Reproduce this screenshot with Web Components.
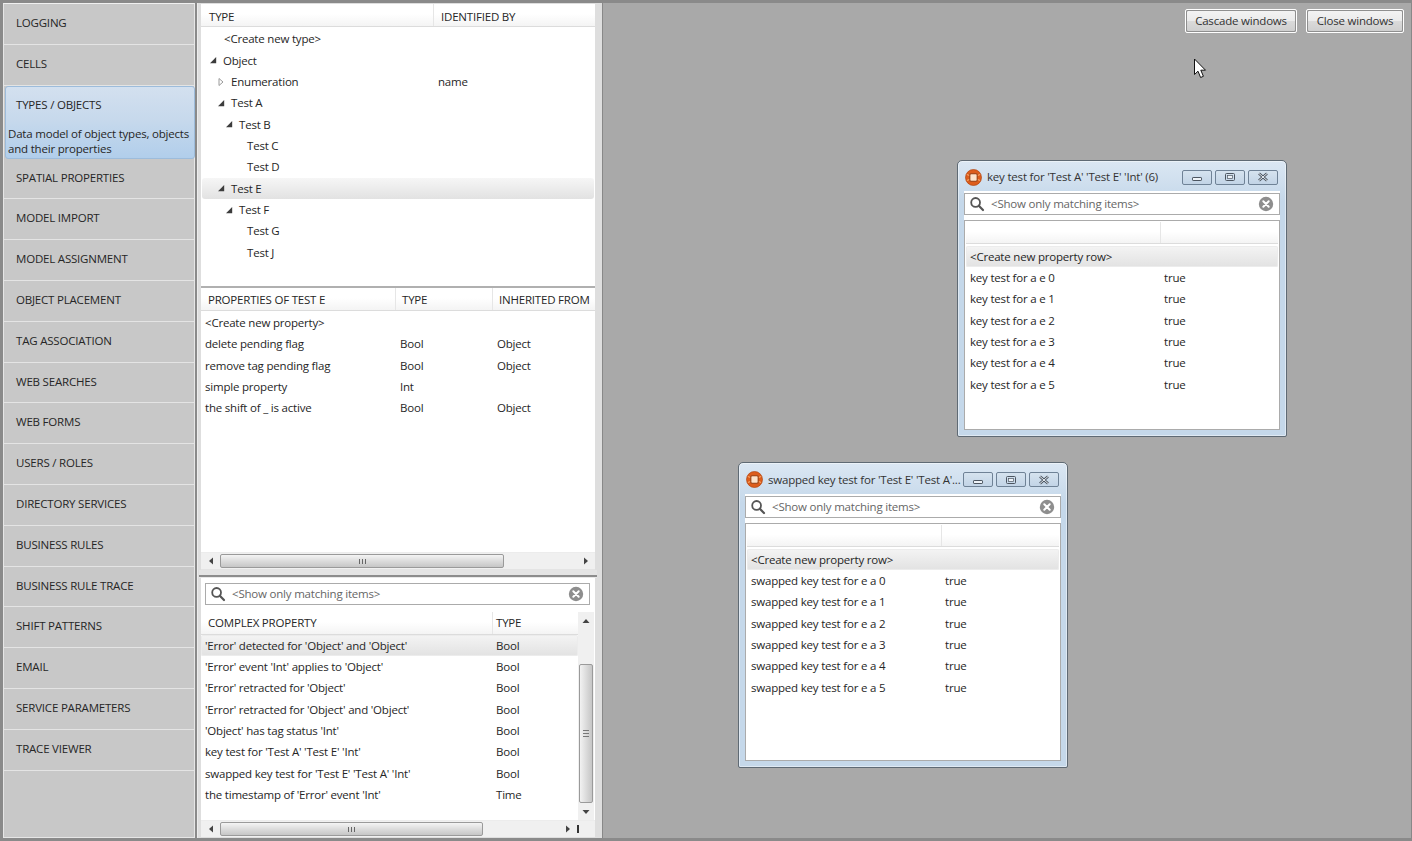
<!DOCTYPE html>
<html><head><meta charset="utf-8"><title>Model editor</title>
<style>
html,body{margin:0;height:100%;overflow:hidden;background:#8a8a8a}
body{font:11.5px/16px "Open Sans","Noto Sans",sans-serif;letter-spacing:-.2px;color:#262626}
</style></head><body>
<x-app></x-app>
<script>
const ICON={
 open:'<svg width="8" height="8" viewBox="0 0 8 8"><path d="M7.2 1V7.2H1Z" fill="#3c3c3c"/></svg>',
 closed:'<svg width="8" height="10" viewBox="0 0 8 10"><path d="M2 1.5L6 5 2 8.5Z" fill="#fff" stroke="#9a9a9a"/></svg>',
 search:'<svg width="16" height="16" viewBox="0 0 16 16"><circle cx="6.6" cy="6.4" r="4.4" fill="none" stroke="#555" stroke-width="1.8"/><path d="M9.8 9.7L14 14" stroke="#555" stroke-width="2.2" stroke-linecap="round"/></svg>',
 clear:'<svg width="16" height="16" viewBox="0 0 16 16"><circle cx="8" cy="8" r="7.2" fill="#8e8e8e"/><path d="M5.3 5.3L10.7 10.7M10.7 5.3L5.3 10.7" stroke="#fff" stroke-width="2" stroke-linecap="round"/></svg>',
 app:'<svg width="17" height="17" viewBox="0 0 17 17"><circle cx="8.5" cy="8.5" r="8" fill="#dd5d1c" stroke="#b0430f" stroke-width=".7"/><path d="M2 5.5L5.5 7M15 5.5L11.5 7M2 11.5L5.5 10M15 11.5L11.5 10" stroke="#f7a566" stroke-width="1.2"/><rect x="4.8" y="4.8" width="7.4" height="7.4" rx="1.2" fill="#fde3cb" stroke="#963c0e" stroke-width="1.1"/></svg>',
 min:'<svg width="12" height="10" viewBox="0 0 12 10"><rect x="1.5" y="5.5" width="9" height="3" rx=".6" fill="#eef3f8" stroke="#4c5560"/></svg>',
 max:'<svg width="12" height="10" viewBox="0 0 12 10"><rect x="1.5" y="1.5" width="9" height="7" rx="1" fill="none" stroke="#4c5560"/><rect x="3.5" y="3.5" width="5" height="3" fill="#eef3f8" stroke="#4c5560" stroke-width=".7"/></svg>',
 close:'<svg width="14" height="10" viewBox="0 0 14 10"><path d="M3 1.5L11 8.5M11 1.5L3 8.5" stroke="#4c5560" stroke-width="2.6"/><path d="M3 1.5L11 8.5M11 1.5L3 8.5" stroke="#e8eef4" stroke-width="1"/></svg>'
};
function def(name,css,render){
 customElements.define(name,class extends HTMLElement{
  connectedCallback(){
   if(this.shadowRoot)return;
   const r=this.attachShadow({mode:'open'});
   r.innerHTML='<style>'+css+'</style>'+render(this);
  }
 });
}
const esc=s=>s.replace(/&/g,'&amp;').replace(/</g,'&lt;').replace(/>/g,'&gt;');

def('x-nav-item',`
:host{display:block;height:40.8px;box-sizing:border-box;border-bottom:1px solid #e4e4e4;padding:11px 0 0 12px;flex:none}
:host([active]){height:73px;margin:0 0 0 1px;width:190px;padding:10px 0 0 10px;border:1px solid #9dbcdb;border-radius:3px;background:linear-gradient(#d3e0ef,#c7d9ec 45%,#b1ceeb)}
p{margin:13px 0 0 -8px;line-height:15px;width:186px}
`,h=>`<slot></slot>${h.getAttribute('desc')?`<p>${esc(h.getAttribute('desc'))}</p>`:''}`);

def('x-nav',`
:host{display:flex;flex-direction:column;width:192px;flex:none;background:#c8c8c8;border:1px solid #e6e6e6;border-top-color:#f0f0f0;margin:3px 0 0 3px;height:835px;box-sizing:border-box}
`,h=>{
 const items=['LOGGING','CELLS','TYPES / OBJECTS','SPATIAL PROPERTIES','MODEL IMPORT','MODEL ASSIGNMENT','OBJECT PLACEMENT','TAG ASSOCIATION','WEB SEARCHES','WEB FORMS','USERS / ROLES','DIRECTORY SERVICES','BUSINESS RULES','BUSINESS RULE TRACE','SHIFT PATTERNS','EMAIL','SERVICE PARAMETERS','TRACE VIEWER'];
 return items.map(t=>t==='TYPES / OBJECTS'?`<x-nav-item active desc="Data model of object types, objects and their properties">${t}</x-nav-item>`:`<x-nav-item>${t}</x-nav-item>`).join('');
});

def('x-search',`
:host{display:flex;align-items:center;height:22px;box-sizing:border-box;border:1px solid #ababab;background:#fff;color:#666;padding:0 5px 0 4px;flex:none}
span{flex:1;margin-left:6px}
svg{display:block;flex:none}
`,()=>`${ICON.search}<span>&lt;Show only matching items&gt;</span>${ICON.clear}`);

def('x-head',`
:host{display:grid;height:var(--hh,23px);box-sizing:border-box;background:linear-gradient(#fff 45%,#f4f4f4);border-bottom:1px solid #dcdcdc;flex:none;grid-template-columns:var(--hcols,var(--cols))}
div{padding-left:var(--hp2,var(--hp,7px));line-height:var(--hl,22px);border-left:1px solid #e6e6e6;white-space:nowrap;overflow:hidden}
div:first-of-type{border-left:0;padding-left:var(--hp,7px)}
`,h=>(h.getAttribute('cols')||'').split('|').map(c=>`<div>${esc(c)}</div>`).join(''));

def('x-row',`
:host{display:grid;height:21.35px;line-height:21px;grid-template-columns:var(--cols);box-sizing:border-box;flex:none;white-space:nowrap}
:host([sel]){background:linear-gradient(#f4f4f4,#e2e2e2);border-radius:2px;box-shadow:inset 0 0 0 1px #ececec}
.c{padding-left:var(--pad,5px);overflow:hidden}
`,h=>(h.getAttribute('cols')||'').split('|').map(c=>`<div class="c">${esc(c)}</div>`).join(''));

def('x-tree-row',`
:host{display:grid;height:21.35px;line-height:21px;grid-template-columns:var(--cols);box-sizing:border-box;flex:none;white-space:nowrap}
:host([sel]){background:linear-gradient(#f6f6f6,#e2e2e2);border-radius:3px;margin:0 1px}
.n{display:flex;align-items:center;overflow:hidden}
.t{width:12px;flex:none;display:flex;justify-content:center}
svg{display:block}
.v{padding-left:5px}
:host([sel]) .v{padding-left:4px}
`,h=>{
 const d=+h.getAttribute('depth')||0,e=h.getAttribute('exp');
 const ml=h.hasAttribute('lead')?5:4;
 const pl=6+d*8-(h.hasAttribute('sel')?1:0);
 return `<div class="n" style="padding-left:${pl}px"><span class="t">${e?ICON[e]:''}</span><span style="margin-left:${ml}px">${esc(h.getAttribute('label'))}</span></div><div class="v">${esc(h.getAttribute('val')||'')}</div>`;
});

def('x-hscroll',`
:host{display:flex;align-items:center;height:17px;background:#f0f0f0;flex:none;box-sizing:border-box;border-top:1px solid #ececec}
.a{width:19px;flex:none;display:flex;justify-content:center}
.th{height:14px;box-sizing:border-box;border:1px solid #9a9a9a;border-radius:2px;background:linear-gradient(#f4f4f4,#dcdcdc 50%,#c6c6c6);display:flex;align-items:center;justify-content:center;flex:none}
.s{flex:1}
i{width:1px;height:5px;background:#666;margin:0 1px;display:block}
svg{display:block}
`,h=>`<div class="a"><svg width="6" height="8" viewBox="0 0 6 8"><path d="M5 .5V7.5L1 4Z" fill="#444"/></svg></div><div class="th" style="width:${h.getAttribute('w')}px"><i></i><i></i><i></i></div><div class="s"></div><div class="a"><svg width="6" height="8" viewBox="0 0 6 8"><path d="M1 .5V7.5L5 4Z" fill="#444"/></svg></div>`);

def('x-vscroll',`
:host{display:flex;flex-direction:column;align-items:center;width:16px;background:#f0f0f0;flex:none;box-sizing:border-box}
.a{height:17px;flex:none;display:flex;align-items:center}
.s1{height:35px;flex:none}
.th{width:14px;height:139px;box-sizing:border-box;border:1px solid #9a9a9a;border-radius:2px;background:linear-gradient(90deg,#f2f2f2,#dcdcdc 50%,#c6c6c6);display:flex;flex-direction:column;align-items:center;justify-content:center;flex:none}
.s2{flex:1}
i{width:6px;height:1px;background:#777;margin:1px 0;display:block}
svg{display:block}
`,()=>`<div class="a"><svg width="8" height="6" viewBox="0 0 8 6"><path d="M.5 5H7.5L4 1Z" fill="#444"/></svg></div><div class="s1"></div><div class="th"><i></i><i></i><i></i></div><div class="s2"></div><div class="a"><svg width="8" height="6" viewBox="0 0 8 6"><path d="M.5 1H7.5L4 5Z" fill="#444"/></svg></div>`);

def('x-types-panel',`
:host{display:flex;flex-direction:column;height:282px;box-sizing:border-box;background:#fff;--cols:232px 1fr;flex:none;--hl:26px;--hp:8px;--hp2:7px}
.b{padding-top:1.2px;display:flex;flex-direction:column}
`,()=>{
 const rows=[['<Create new type>',0,'','',1],['Object',0,'open'],['Enumeration',1,'closed','name'],['Test A',1,'open'],['Test B',2,'open'],['Test C',3,''],['Test D',3,''],['Test E',1,'open','',0,1],['Test F',2,'open'],['Test G',3,''],['Test J',3,'']];
 return `<x-head cols="TYPE|IDENTIFIED BY"></x-head><div class="b">`+rows.map(r=>`<x-tree-row label="${esc(r[0])}" depth="${r[1]}" ${r[2]?`exp="${r[2]}"`:''} val="${r[3]||''}" ${r[4]?'lead':''} ${r[5]?'sel':''}></x-tree-row>`).join('')+`</div>`;
});

def('x-props-panel',`
:host{display:flex;flex-direction:column;flex:1;min-height:0;background:#e4e4e4;--cols:195px 97px 1fr;--hcols:194px 97px 1fr;--pad:4px;--hp:7px;--hp2:6px;--hl:24px;border-top:2px solid #b0b0b0}
.b{flex:1;padding-top:.9px;background:#fff}
x-hscroll{margin-bottom:1px}
`,()=>{
 const rows=['<Create new property>||','delete pending flag|Bool|Object','remove tag pending flag|Bool|Object','simple property|Int|','the shift of _ is active|Bool|Object'];
 return `<x-head cols="PROPERTIES OF TEST E|TYPE|INHERITED FROM"></x-head><div class="b">`+rows.map(r=>`<x-row cols="${esc(r)}"></x-row>`).join('')+`</div><x-hscroll w="284"></x-hscroll>`;
});

def('x-complex-panel',`
:host{display:flex;flex-direction:column;flex:none;height:259px;box-sizing:border-box;background:#fff;padding:5px 5px 0 4px;--cols:291px 1fr;--pad:4px;--hl:22px}
.f{margin-bottom:7px}
.m{flex:1;min-height:0;display:flex;margin-left:-4px;margin-right:-4px}
.l{flex:1;min-width:0;display:flex;flex-direction:column}
.h{--hp2:3px;margin-bottom:-.5px}
.foot{display:flex;margin-left:-4px;margin-right:-5px;flex:none}
.foot x-hscroll{flex:1;min-width:0}
.corner{width:18px;flex:none;background:#f0f0f0;border-top:1px solid #ececec;box-sizing:border-box;display:flex;align-items:center}
.corner i{display:block;width:1.5px;height:8px;background:#333}
`,()=>{
 const rows=["'Error' detected for 'Object' and 'Object'|Bool","'Error' event 'Int' applies to 'Object'|Bool","'Error' retracted for 'Object'|Bool","'Error' retracted for 'Object' and 'Object'|Bool","'Object' has tag status 'Int'|Bool","key test for 'Test A' 'Test E' 'Int'|Bool","swapped key test for 'Test E' 'Test A' 'Int'|Bool","the timestamp of 'Error' event 'Int'|Time"];
 return `<x-search class="f"></x-search><div class="m"><div class="l"><x-head class="h" cols="COMPLEX PROPERTY|TYPE"></x-head>`+rows.map((r,i)=>`<x-row cols="${esc(r)}" ${i==0?'sel':''}></x-row>`).join('')+`</div><x-vscroll></x-vscroll></div><div class="foot"><x-hscroll w="263"></x-hscroll><div class="corner"><i></i></div></div>`;
});

def('x-mid',`
:host{display:flex;flex-direction:column;width:406px;flex:none;margin-top:3px;height:835px;background:#dedede;box-sizing:border-box;padding:1px 7px 0 3px;border-left:1px solid #ececec;border-right:1px solid #888}
.top{height:566px;display:flex;flex-direction:column;flex:none}
.split{height:8px;flex:none;background:linear-gradient(#e4e4e4 0,#e4e4e4 5px,#8c8c8c 5px,#8c8c8c 7px,#e8e8e8 7px);margin:0 -2px}
`,()=>`<div class="top"><x-types-panel></x-types-panel><x-props-panel></x-props-panel></div><div class="split"></div><x-complex-panel></x-complex-panel>`);

def('x-btn',`
:host{display:block;height:24px;box-sizing:border-box;border:1px solid #fff;border-radius:2px;flex:none}
div{height:100%;box-sizing:border-box;border:1px solid #8f8f8f;border-radius:2px;background:linear-gradient(#f3f3f3,#ebebeb 48%,#dadada 52%,#cfcfcf);line-height:20px;text-align:center;color:#333}
`,()=>`<div><slot></slot></div>`);

def('x-window',`
:host{position:absolute;display:flex;flex-direction:column;box-sizing:border-box;width:330px;border:1px solid #5f6a74;border-radius:5px 5px 2px 2px;background:linear-gradient(#dbe7f3,#c5d8ea 40px);padding:0 6px 6px;--cols:194px 1fr;--pad:4px;box-shadow:inset 0 0 0 1px rgba(255,255,255,.45)}
.t{height:var(--th,31px);box-sizing:border-box;padding:2px 2px 0 1px;display:flex;align-items:center;flex:none}
.t svg{display:block;flex:none}
.ti{flex:1;min-width:0;margin-left:5px;color:#333;white-space:nowrap;overflow:hidden}
.bs{display:flex;gap:3px;flex:none}
.b{box-sizing:border-box;width:30px;height:15px;border:1px solid #6f8296;border-radius:2px;display:flex;align-items:center;justify-content:center;background:linear-gradient(#d6e3ef,#c2d4e6)}
.body{flex:1;background:#fff;display:flex;flex-direction:column;min-height:0;padding-top:2px}
.tb{margin-top:5px;flex:1;border:1px solid #ababab;display:flex;flex-direction:column;padding:1px 1px 0}
x-head{--hh:22px}
.sp{height:1.7px;flex:none}
`,h=>{
 const p=h.getAttribute('prefix');
 let r='<x-row sel cols="&lt;Create new property row&gt;|"></x-row>';
 for(let i=0;i<6;i++) r+=`<x-row cols="${p} ${i}|true"></x-row>`;
 return `<div class="t">${ICON.app}<div class="ti">${esc(h.getAttribute('title'))}</div><div class="bs"><div class="b">${ICON.min}</div><div class="b">${ICON.max}</div><div class="b">${ICON.close}</div></div></div><div class="body"><x-search></x-search><div class="tb"><x-head cols=" | "></x-head><div class="sp"></div>${r}</div></div>`;
});

def('x-desk',`
:host{display:block;flex:1;min-width:0;margin-top:3px;height:835px;background:#a9a9a9;position:relative;border-right:1px solid #888}
.bar{display:flex;justify-content:flex-end;gap:9px;padding:6px 7px 0 0}
.cur{position:absolute;left:590px;top:55px;display:block}
`,()=>`<div class="bar"><x-btn style="width:112px">Cascade windows</x-btn><x-btn style="width:98px">Close windows</x-btn></div>
<x-window style="left:354px;top:157px;height:277px;--th:30px" title="key test for 'Test A' 'Test E' 'Int' (6)" prefix="key test for a e"></x-window>
<x-window style="left:135px;top:459px;height:306px" title="swapped key test for 'Test E' 'Test A'..." prefix="swapped key test for e a"></x-window>
<svg class="cur" width="14" height="21" viewBox="0 0 14 21"><path d="M1.5 1V16.5L5 13.2 7.6 19.5 10.4 18.3 7.8 12.2H12.5Z" fill="#fff" stroke="#111" stroke-width="1"/></svg>`);

def('x-app',`
:host{display:flex;width:1412px;height:841px;background:#8a8a8a;box-sizing:border-box;align-items:flex-start}
.gap{width:2px;flex:none}
`,()=>`<x-nav></x-nav><div class="gap"></div><x-mid></x-mid><x-desk></x-desk>`);
</script>
</body></html>
